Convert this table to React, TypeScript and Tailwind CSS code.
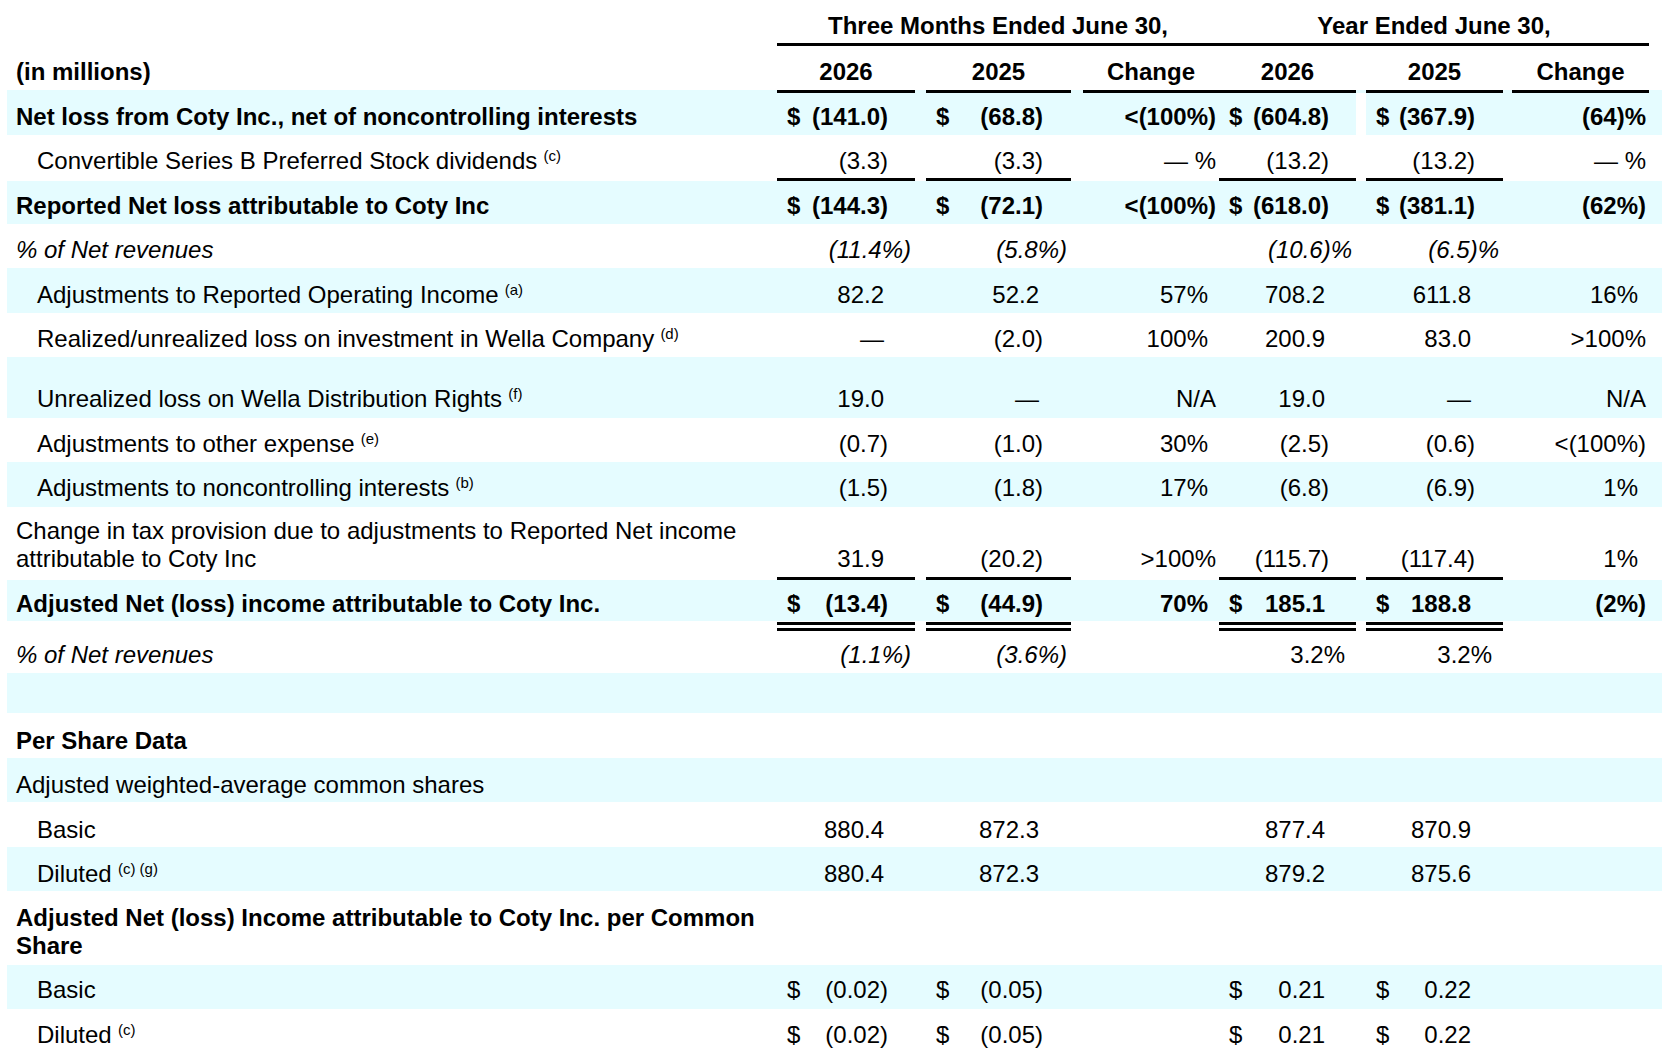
import React from 'react'

const BAND = 'bg-[#e5fcff]'
const GRID = 'grid grid-cols-[770px_149px_157px_136px_147px_146px_137px]'
// right gap after each value column's rule (px)
const GAP = ['mr-[11px]', 'mr-[12px]', 'mr-0', 'mr-[10px]', 'mr-[9px]', 'mr-0']
const PR = ['pr-[27px]', 'pr-[28px]', 'pr-[3px]', 'pr-[27px]', 'pr-[28px]', 'pr-[3px]']
const isChange = (i: number) => i === 2 || i === 5

type Row = {
  label?: React.ReactNode
  indent?: boolean
  bold?: boolean
  italic?: boolean
  band?: boolean
  h: string
  pb: string
  vals?: (string | null)[]
  pct?: boolean
  upright?: boolean
  whiteGap?: boolean
}

// plain numbers leave room for a closing paren so the digits line up
const hangs = (v: string) => /^[\d.—]+%?$/.test(v)

function Sup({ children }: { children: React.ReactNode }) {
  return (
    <span className="relative -top-[8px] ml-[2px] text-[15px] leading-none font-normal not-italic"> {children}</span>
  )
}

function Rule({ cols, bg = '', dbl = false }: { cols: number[]; bg?: string; dbl?: boolean }) {
  return (
    <div className={`${GRID} ${dbl ? 'h-[10px]' : 'h-[3px]'} ${bg}`}>
      <div />
      {[0, 1, 2, 3, 4, 5].map((i) => (
        <div key={i}>
          {cols.includes(i) &&
            (dbl ? (
              <div className={`${GAP[i]} mt-[1px] h-[9px] border-y-[3px] border-black`} />
            ) : (
              <div className={`${GAP[i]} h-full bg-black`} />
            ))}
        </div>
      ))}
    </div>
  )
}

function Hang({ i, pct }: { i: number; pct?: boolean }) {
  if (isChange(i)) return <span className="invisible">)</span>
  return <span className={`inline-block ${pct ? 'w-[7px]' : 'w-[4px]'}`} />
}

function DataRow({ row }: { row: Row }) {
  const vals = row.vals ?? [null, null, null, null, null, null]
  return (
    <div className={`${GRID} ${row.h} ${row.band ? BAND : ''} ${row.bold ? 'font-bold' : ''}`}>
      <div
        className={`flex items-end whitespace-nowrap ${row.pb} ${row.italic ? 'italic' : ''} ${
          row.indent ? 'pl-[30px]' : 'pl-[9px]'
        }`}
      >
        <div>{row.label}</div>
      </div>
      {vals.map((v, i) => {
        const white = row.whiteGap && i === 3
        const dollar = !!v && v.startsWith('$')
        const text = v ? (dollar ? v.slice(1) : v) : ''
        const slant = row.italic && !(row.upright && /^\d/.test(text))
        return (
          <div key={i} className={white ? 'bg-white' : ''}>
            <div
              className={`h-full ${GAP[i]} ${row.pb} ${row.pct ? 'pr-[4px]' : PR[i]} pl-[10px] flex items-end justify-between whitespace-nowrap ${
                white ? BAND : ''
              } ${slant ? 'italic' : ''}`}
            >
              <span>{dollar ? '$' : ''}</span>
              {v && (
                <span>
                  {text}
                  {hangs(text) && <Hang i={i} pct={row.pct} />}
                </span>
              )}
            </div>
          </div>
        )
      })}
    </div>
  )
}

const top: Row[] = [
  {
    label: 'Net loss from Coty Inc., net of noncontrolling interests',
    bold: true,
    band: true,
    h: 'h-[42px]',
    pb: 'pb-[4px]',
    vals: ['$(141.0)', '$(68.8)', '<(100%)', '$(604.8)', '$(367.9)', '(64)%'],
    whiteGap: true,
  },
  {
    label: (
      <>
        Convertible Series B Preferred Stock dividends<Sup>(c)</Sup>
      </>
    ),
    indent: true,
    h: 'h-[43px]',
    pb: 'pb-[3px]',
    vals: ['(3.3)', '(3.3)', '— %', '(13.2)', '(13.2)', '— %'],
  },
]

const middle: Row[] = [
  {
    label: 'Reported Net loss attributable to Coty Inc',
    bold: true,
    band: true,
    h: 'h-[43px]',
    pb: 'pb-[4px]',
    vals: ['$(144.3)', '$(72.1)', '<(100%)', '$(618.0)', '$(381.1)', '(62%)'],
  },
  {
    label: '% of Net revenues',
    italic: true,
    pct: true,
    h: 'h-[44px]',
    pb: 'pb-[4px]',
    vals: ['(11.4%)', '(5.8%)', null, '(10.6)%', '(6.5)%', null],
  },
  {
    label: (
      <>
        Adjustments to Reported Operating Income<Sup>(a)</Sup>
      </>
    ),
    indent: true,
    band: true,
    h: 'h-[45px]',
    pb: 'pb-[4px]',
    vals: ['82.2', '52.2', '57%', '708.2', '611.8', '16%'],
  },
  {
    label: (
      <>
        Realized/unrealized loss on investment in Wella Company<Sup>(d)</Sup>
      </>
    ),
    indent: true,
    h: 'h-[44px]',
    pb: 'pb-[4px]',
    vals: ['—', '(2.0)', '100%', '200.9', '83.0', '>100%'],
  },
  {
    label: (
      <>
        Unrealized loss on Wella Distribution Rights<Sup>(f)</Sup>
      </>
    ),
    indent: true,
    band: true,
    h: 'h-[61px]',
    pb: 'pb-[5px]',
    vals: ['19.0', '—', 'N/A', '19.0', '—', 'N/A'],
  },
  {
    label: (
      <>
        Adjustments to other expense<Sup>(e)</Sup>
      </>
    ),
    indent: true,
    h: 'h-[44px]',
    pb: 'pb-[4px]',
    vals: ['(0.7)', '(1.0)', '30%', '(2.5)', '(0.6)', '<(100%)'],
  },
  {
    label: (
      <>
        Adjustments to noncontrolling interests<Sup>(b)</Sup>
      </>
    ),
    indent: true,
    band: true,
    h: 'h-[45px]',
    pb: 'pb-[5px]',
    vals: ['(1.5)', '(1.8)', '17%', '(6.8)', '(6.9)', '1%'],
  },
  {
    label: (
      <>
        Change in tax provision due to adjustments to Reported Net income
        <br />
        attributable to Coty Inc
      </>
    ),
    h: 'h-[70px]',
    pb: 'pb-[4px]',
    vals: ['31.9', '(20.2)', '>100%', '(115.7)', '(117.4)', '1%'],
  },
]

const adjusted: Row = {
  label: 'Adjusted Net (loss) income attributable to Coty Inc.',
  bold: true,
  band: true,
  h: 'h-[41px]',
  pb: 'pb-[3px]',
  vals: ['$(13.4)', '$(44.9)', '70%', '$185.1', '$188.8', '(2%)'],
}

const bottom: Row[] = [
  {
    label: '% of Net revenues',
    italic: true,
    upright: true,
    pct: true,
    h: 'h-[42px]',
    pb: 'pb-[4px]',
    vals: ['(1.1%)', '(3.6%)', null, '3.2%', '3.2%', null],
  },
  { band: true, h: 'h-[40px]', pb: 'pb-[3px]' },
  { label: 'Per Share Data', bold: true, h: 'h-[45px]', pb: 'pb-[3px]' },
  { label: 'Adjusted weighted-average common shares', band: true, h: 'h-[44px]', pb: 'pb-[3px]' },
  {
    label: 'Basic',
    indent: true,
    h: 'h-[45px]',
    pb: 'pb-[3px]',
    vals: ['880.4', '872.3', null, '877.4', '870.9', null],
  },
  {
    label: (
      <>
        Diluted<Sup>(c) (g)</Sup>
      </>
    ),
    indent: true,
    band: true,
    h: 'h-[44px]',
    pb: 'pb-[3px]',
    vals: ['880.4', '872.3', null, '879.2', '875.6', null],
  },
  {
    label: (
      <>
        Adjusted Net (loss) Income attributable to Coty Inc. per Common
        <br />
        Share
      </>
    ),
    bold: true,
    h: 'h-[74px]',
    pb: 'pb-[5px]',
  },
  {
    label: 'Basic',
    indent: true,
    band: true,
    h: 'h-[44px]',
    pb: 'pb-[5px]',
    vals: ['$(0.02)', '$(0.05)', null, '$0.21', '$0.22', null],
  },
  {
    label: (
      <>
        Diluted<Sup>(c)</Sup>
      </>
    ),
    indent: true,
    h: 'h-[45px]',
    pb: 'pb-[5px]',
    vals: ['$(0.02)', '$(0.05)', null, '$0.21', '$0.22', null],
  },
]

const years = ['2026', '2025', 'Change', '2026', '2025', 'Change']

export default function App() {
  return (
    <div className="w-[1662px] h-[1064px] overflow-hidden bg-white pl-[7px] text-black text-[24px] leading-[28px] font-['Liberation_Sans',Arial,Helvetica,sans-serif]">
      {/* period headers */}
      <div className={`${GRID} h-[43px] font-bold`}>
        <div />
        <div className="col-span-3 flex items-end justify-center pb-[3px]">Three Months Ended June 30,</div>
        <div className="col-span-3 flex items-end justify-center pb-[3px]">Year Ended June 30,</div>
      </div>
      <div className={`${GRID} h-[3px]`}>
        <div />
        <div className="col-span-6 bg-black" />
      </div>

      {/* column headers */}
      <div className={`${GRID} h-[44px] font-bold`}>
        <div className="flex items-end pb-[4px] pl-[9px]">(in millions)</div>
        {years.map((y, i) => (
          <div key={i}>
            <div className={`h-full ${GAP[i]} flex items-end justify-center pb-[4px]`}>{y}</div>
          </div>
        ))}
      </div>
      <Rule cols={[0, 1, 2, 3, 4, 5]} bg={BAND} />

      {top.map((r, i) => (
        <DataRow key={i} row={r} />
      ))}
      <Rule cols={[0, 1, 3, 4]} />
      {middle.map((r, i) => (
        <DataRow key={i} row={r} />
      ))}
      <Rule cols={[0, 1, 3, 4]} />
      <DataRow row={adjusted} />
      <Rule cols={[0, 1, 3, 4]} dbl />
      {bottom.map((r, i) => (
        <DataRow key={i} row={r} />
      ))}
    </div>
  )
}
